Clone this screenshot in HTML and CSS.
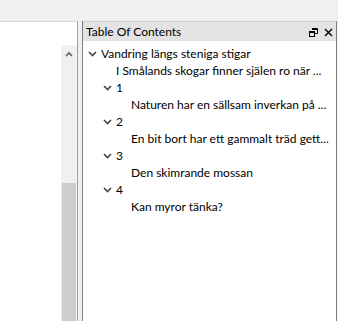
FILE: index.html
```html
<!DOCTYPE html>
<html lang="sv">
<head>
    <meta charset="UTF-8">
    <title>Table Of Contents</title>
    <link rel="stylesheet" href="styles.css">
</head>
<body>
    <div class="topbar"></div>
    <div class="main">
        <div class="editor">
            <div class="editor-body"></div>
            <div class="scrollbar">
                <div class="scroll-btn">
                    <svg width="8" height="6" viewBox="0 0 8 6"><path d="M1 5 L4 2 L7 5" fill="none" stroke="#606060" stroke-width="1.6"/></svg>
                </div>
                <div class="scroll-track"></div>
                <div class="scroll-thumb"></div>
            </div>
        </div>
        <div class="splitter"></div>
        <div class="toc">
            <div class="toc-header">
                <span class="toc-title">Table Of Contents</span>
                <span class="toc-buttons">
                    <svg class="btn-float" width="9" height="9" viewBox="0 0 9 9">
                        <path d="M3 0.5 H8.5 V5.5 H6" fill="none" stroke="#000" stroke-width="1"/>
                        <path d="M3 1.5 H8" stroke="#000" stroke-width="1"/>
                        <rect x="0.5" y="3.5" width="5" height="5" fill="none" stroke="#000" stroke-width="1"/>
                        <path d="M0.5 4.5 H5.5" stroke="#000" stroke-width="1"/>
                    </svg>
                    <svg class="btn-close" width="9" height="9" viewBox="0 0 9 9">
                        <path d="M1 1 L8 8 M8 1 L1 8" stroke="#000" stroke-width="1.4"/>
                    </svg>
                </span>
            </div>
            <div class="toc-tree">
                <div class="row lvl0">
                    <span class="twisty"><svg width="9" height="6" viewBox="0 0 9 6"><path d="M1 1 L4.5 4.5 L8 1" fill="none" stroke="#444" stroke-width="1.6"/></svg></span>
                    <span class="label">Vandring längs steniga stigar</span>
                </div>
                <div class="row lvl1">
                    <span class="twisty"></span>
                    <span class="label">I Smålands skogar finner själen ro när ...</span>
                </div>
                <div class="row lvl1">
                    <span class="twisty"><svg width="9" height="6" viewBox="0 0 9 6"><path d="M1 1 L4.5 4.5 L8 1" fill="none" stroke="#444" stroke-width="1.6"/></svg></span>
                    <span class="label">1</span>
                </div>
                <div class="row lvl2">
                    <span class="twisty"></span>
                    <span class="label">Naturen har en sällsam inverkan på ...</span>
                </div>
                <div class="row lvl1">
                    <span class="twisty"><svg width="9" height="6" viewBox="0 0 9 6"><path d="M1 1 L4.5 4.5 L8 1" fill="none" stroke="#444" stroke-width="1.6"/></svg></span>
                    <span class="label">2</span>
                </div>
                <div class="row lvl2">
                    <span class="twisty"></span>
                    <span class="label">En bit bort har ett gammalt träd gett...</span>
                </div>
                <div class="row lvl1">
                    <span class="twisty"><svg width="9" height="6" viewBox="0 0 9 6"><path d="M1 1 L4.5 4.5 L8 1" fill="none" stroke="#444" stroke-width="1.6"/></svg></span>
                    <span class="label">3</span>
                </div>
                <div class="row lvl2">
                    <span class="twisty"></span>
                    <span class="label">Den skimrande mossan</span>
                </div>
                <div class="row lvl1">
                    <span class="twisty"><svg width="9" height="6" viewBox="0 0 9 6"><path d="M1 1 L4.5 4.5 L8 1" fill="none" stroke="#444" stroke-width="1.6"/></svg></span>
                    <span class="label">4</span>
                </div>
                <div class="row lvl2">
                    <span class="twisty"></span>
                    <span class="label">Kan myror tänka?</span>
                </div>
            </div>
        </div>
    </div>
</body>
</html>
```
FILE: styles.css
```css
html, body {
    margin: 0;
    padding: 0;
}
body {
    width: 338px;
    height: 321px;
    overflow: hidden;
    background-color: #f0f0f0;
    font-family: Lato, "Noto Sans", sans-serif;
    font-size: 12px;
    color: #000;
    display: flex;
    flex-direction: column;
}
.topbar {
    height: 21px;
    flex: none;
}
.main {
    flex: 1;
    display: flex;
    min-height: 0;
}
.editor {
    width: 77px;
    flex: none;
    display: flex;
    background-color: #fff;
    border-top: 1px solid #d9d9d9;
    border-right: 1px solid #a0a0a0;
}
.editor-body {
    flex: 1;
}
.scrollbar {
    width: 16px;
    flex: none;
    display: flex;
    flex-direction: column;
    margin-top: 23px;
    background-color: #f0f0f0;
}
.scroll-btn {
    height: 17px;
    display: flex;
    align-items: center;
    justify-content: center;
}
.scroll-track {
    height: 121px;
}
.scroll-thumb {
    flex: 1;
    margin: 0 1px;
    background-color: #cdcdcd;
}
.splitter {
    width: 4px;
    flex: none;
}
.toc {
    width: 253px;
    flex: none;
    margin-right: 1px;
    display: flex;
    flex-direction: column;
    border-left: 1px solid #7a7f85;
    border-right: 1px solid #7a7f85;
    background-color: #fff;
}
.toc-header {
    height: 19px;
    flex: none;
    display: flex;
    align-items: center;
    justify-content: space-between;
    padding: 0 3px 0 3px;
    background-color: #e3e3e3;
    border-top: 1px solid #d0d0d0;
}
.toc-title {
    line-height: 19px;
}
.toc-buttons {
    display: flex;
    align-items: center;
    gap: 6px;
    padding-top: 1px;
}
.toc-tree {
    flex: 1;
    padding-top: 4px;
    overflow: hidden;
}
.row {
    display: flex;
    align-items: center;
    height: 17px;
    white-space: nowrap;
}
.lvl0 {
    padding-left: 4px;
}
.lvl1 {
    padding-left: 19px;
}
.lvl2 {
    padding-left: 34px;
}
.twisty {
    width: 14px;
    flex: none;
    display: flex;
    align-items: center;
    padding-left: 1px;
    box-sizing: border-box;
}
.label {
    line-height: 17px;
}
```
